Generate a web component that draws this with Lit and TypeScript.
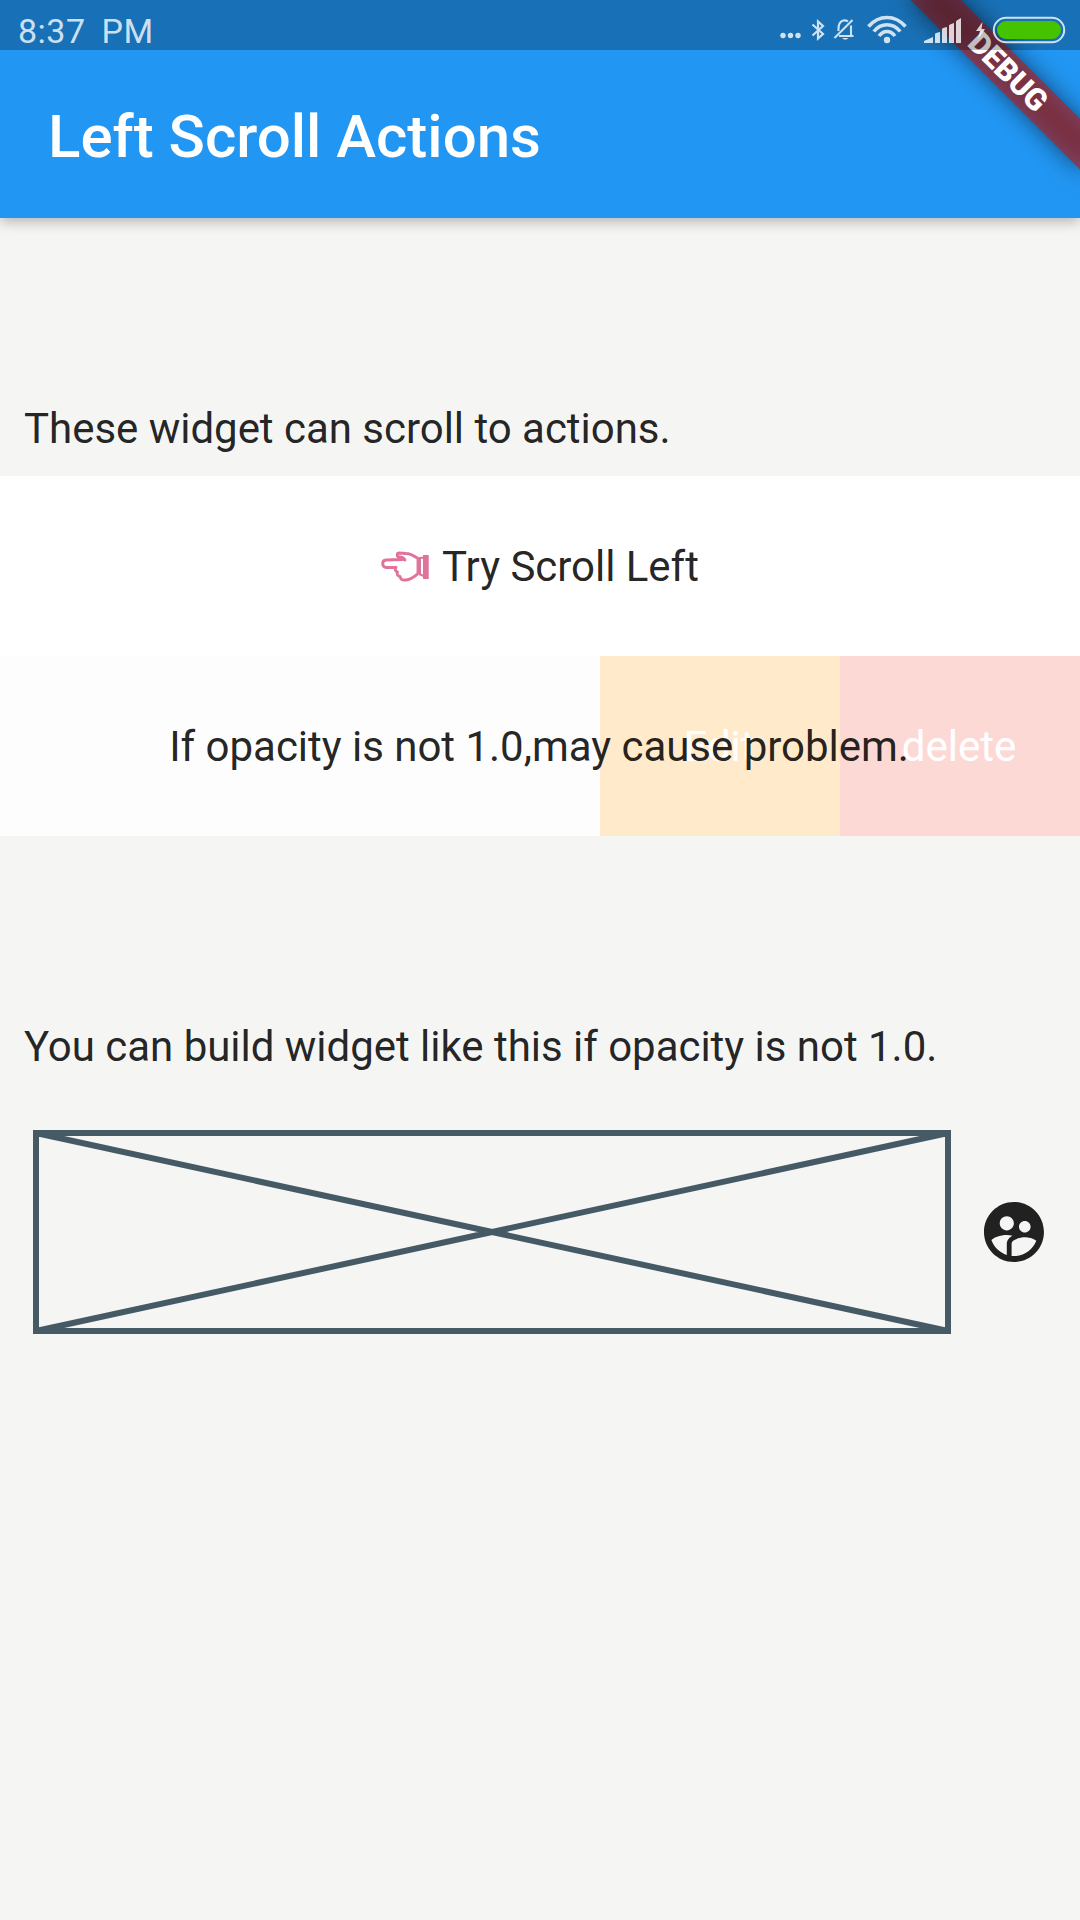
import { LitElement, html, css } from "lit";
import { customElement } from "lit/decorators.js";

@customElement("debug-banner")
class DebugBanner extends LitElement {
  static styles = css`
    :host { position: absolute; inset: 0 0 auto auto; width: 240px; height: 240px; overflow: hidden; pointer-events: none; }
    .pivot { position: absolute; right: 0; top: 0; width: 0; height: 0; transform: rotate(45deg); transform-origin: 0 0; }
    .shade, .ribbon { position: absolute; left: -120px; top: 84px; width: 240px; height: 36px; }
    .shade { background: rgba(0, 0, 0, 0.5); filter: blur(11.9px); }
    .ribbon { background: rgba(183, 28, 28, 0.627); color: #fff; font: 900 30.6px/36px Roboto, sans-serif; text-align: center; }
  `;
  render() {
    return html`<div class="pivot"><div class="shade"></div><div class="ribbon">DEBUG</div></div>`;
  }
}

@customElement("status-bar")
class StatusBar extends LitElement {
  static styles = css`
    :host { position: absolute; inset: 0 0 auto 0; height: 50px; background: rgba(0, 0, 0, 0.25); display: flex; justify-content: space-between; color: rgba(255, 255, 255, 0.8); }
    .time { padding-left: 18px; font: 400 34px/62px Roboto, sans-serif; letter-spacing: 0.5px; word-spacing: 7px; white-space: pre; }
    .icons { width: 310px; height: 50px; }
  `;
  render() {
    return html`
      <span class="time">8:37 PM</span>
      <svg class="icons" viewBox="770 0 310 50" fill="currentColor">
        <circle cx="783" cy="35.5" r="2.7" /><circle cx="790.5" cy="35.5" r="2.7" /><circle cx="798" cy="35.5" r="2.7" />
        <path d="M812.5 24.5 L823 34 L818 38.500 V21.500 L823 26 L812.500 35.500" fill="none" stroke="currentColor" stroke-width="2.2" />
        <path d="M838.500 31 V29 C838.500 18.500 846 20 848 21.500 M851 25.500 V35 M839 36 H853.500 M834.500 38 L852.500 20" fill="none" stroke="currentColor" stroke-width="2.100" />
        <path d="M842 38 H848.500 Q845.200 41.500 842 38 Z" />
        <g fill="none" stroke="currentColor" stroke-width="3.600">
          <path d="M868.500 26.500 C879 14.500 895 14.500 905.500 26.500" />
          <path d="M873.800 31.500 C881 22.500 893 22.500 900.200 31.500" />
          <path d="M879 36 C883.500 30 890.500 30 895 36" />
        </g>
        <circle cx="887" cy="40" r="3.200" />
        <path d="M924 43 V41 L933 37 V43 Z M935 43 V34 Q935 33 940 32 V43 Z M942 43 V29 Q942 28 947 27 V43 Z M949 43 V25.500 Q949 24.500 954 23 V43 Z M956 43 V21.500 Q956 20.500 961 18 V43 Z" />
        <path d="M982.500 22 L976 31 H980 L978 39 L985 29 H981.500 Z" />
        <rect x="993.800" y="17.800" width="70.400" height="24.400" rx="12.200" fill="none" stroke="currentColor" stroke-width="2" />
        <rect x="997" y="21" width="64" height="18" rx="9" fill="#46c300" />
      </svg>
    `;
  }
}

@customElement("app-root")
class AppRoot extends LitElement {
  static styles = css`
    :host { display: block; position: relative; width: 1080px; height: 1920px; overflow: hidden; background: #f5f5f4; font: 400 42px/49px Roboto, sans-serif; letter-spacing: -0.025px; color: rgba(0, 0, 0, 0.87); }
    .page { display: flex; flex-direction: column; }
    .bar { height: 162px; padding: 56px 48px 0; display: flex; align-items: center; background: #2196f3; color: #fff; font-size: 60px; font-weight: 500; line-height: 70px; letter-spacing: 0; box-shadow: 0 3px 13px rgba(0, 0, 0, 0.29); }
    .note { padding: 0 24px; white-space: nowrap; }
    .first { margin-top: 186px; }
    .second { margin-top: 186px; }
    .row { height: 180px; display: grid; background: #fff; }
    .first + .row { margin-top: 23px; }
    .layer { grid-area: 1 / 1; display: flex; align-items: center; justify-content: center; }
    .actions { justify-content: flex-end; color: #fff; }
    .action { box-sizing: border-box; width: 240px; height: 180px; padding-right: 2px; display: flex; align-items: center; justify-content: center; }
    .edit { background: #ff9800; }
    .delete { background: #f44336; }
    .veil { padding-right: 2px; background: rgba(255, 255, 255, 0.8); z-index: 1; }
    .under { background: #f5f5f4; }
    .hand { width: 50px; height: 34px; margin: 0 12px 0 -1px; }
    .sample { display: flex; align-items: center; margin-top: 59px; padding-left: 33px; }
    .placeholder { width: 918px; height: 204px; }
    .group { width: 72px; height: 72px; margin-left: 27px; fill: #212121; }
  `;
  render() {
    return html`
      <div class="page">
        <header class="bar">Left Scroll Actions</header>
        <div class="note first">These widget can scroll to actions.</div>
        <div class="row">
          <div class="layer">
            <svg class="hand" viewBox="380 549 50 34" fill="none" stroke="#e0729b" stroke-width="2.900" stroke-linejoin="round" stroke-linecap="round">
              <path d="M403 559.500 L386 560 C381.500 560.500 381.500 567 386.500 567.500 H396 C394.500 569.500 395.500 571.500 397.500 572 C396.500 574 397.500 576 400 576.500 C400.500 579.500 402.500 580.500 405 580 C411 580 415 576 418 573.500 V558.500 C415 556.500 411 553.500 406 553.500 L399.500 553 C396.500 553 396.500 557 399.500 557 C403 557 404 558 405 560" />
              <path d="M420 558 L424 557.500 V576 L420 574.500 Z" stroke-width="2" />
              <path d="M423 555 H428.700 V579 H423 Z" fill="#e0729b" stroke="none" />
            </svg>
            <span>Try Scroll Left</span>
          </div>
        </div>
        <div class="row under">
          <div class="layer actions">
            <div class="action edit">Edit</div>
            <div class="action delete">delete</div>
          </div>
          <div class="layer veil">If opacity is not 1.0,may cause problem.</div>
        </div>
        <div class="note second">You can build widget like this if opacity is not 1.0.</div>
        <div class="sample">
          <svg class="placeholder" viewBox="0 0 918 204" fill="none" stroke="#455a64" stroke-width="6">
            <path d="M3 3 H915 V201 H3 Z L915 201 M915 3 L3 201" />
          </svg>
          <svg class="group" viewBox="0 0 24 24">
            <path d="M11.990 2c-5.520 0-10 4.480-10 10s4.480 10 10 10 10-4.480 10-10-4.480-10-10-10zm3.610 6.340c1.070 0 1.930.86 1.930 1.930 0 1.070-.86 1.930-1.930 1.930-1.070 0-1.930-.86-1.930-1.930-.01-1.070.86-1.930 1.930-1.930zm-6-1.580c1.300 0 2.360 1.060 2.360 2.360 0 1.300-1.060 2.360-2.360 2.360s-2.360-1.060-2.360-2.360c0-1.310 1.050-2.360 2.360-2.360zm0 9.130v3.750c-2.400-.75-4.300-2.600-5.140-4.960 1.050-1.120 3.670-1.690 5.140-1.690.53 0 1.200.08 1.900.22-1.640.87-1.900 2.020-1.900 2.680zM11.990 20c-.27 0-.53-.01-.79-.04v-4.070c0-1.420 2.940-2.130 4.400-2.130 1.070 0 2.920.39 3.840 1.150-1.170 2.970-4.060 5.090-7.450 5.090z" />
          </svg>
        </div>
      </div>
      <debug-banner></debug-banner>
      <status-bar></status-bar>
    `;
  }
}
